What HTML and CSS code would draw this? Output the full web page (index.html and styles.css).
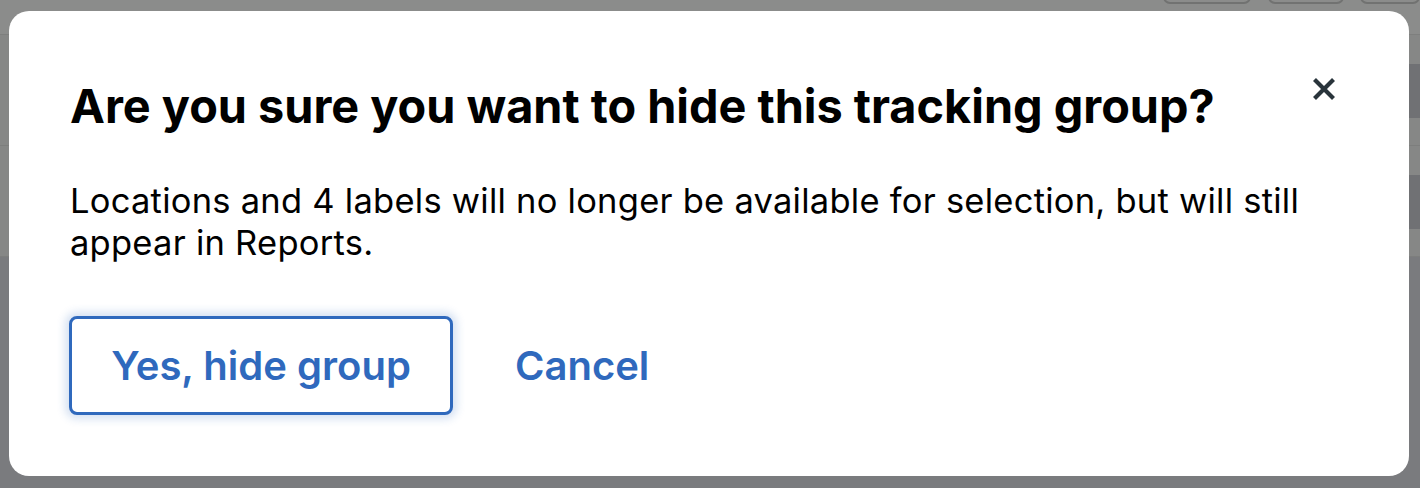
FILE: index.html
```html
<!DOCTYPE html>
<html lang="en">
<head>
<meta charset="utf-8">
<title>Hide tracking group</title>
<link rel="stylesheet" href="styles.css">
</head>
<body>
<div class="page">
  <header class="topbar">
    <span class="tb-btn tb-1"></span>
    <span class="tb-btn tb-2"></span>
    <span class="tb-btn tb-3"></span>
  </header>
  <div class="row"><span class="row-btn"></span></div>
  <div class="row"><span class="row-btn"></span></div>
  <div class="rest"></div>
</div>

<div class="modal" role="dialog" aria-labelledby="m-title">
  <button class="close" aria-label="Close">
    <svg width="24" height="24" viewBox="0 0 24 24" aria-hidden="true">
      <path d="M2.5 2.5 L21.5 21.5 M21.5 2.5 L2.5 21.5" stroke="#29343b" stroke-width="4.2" stroke-linecap="butt" fill="none"/>
    </svg>
  </button>
  <h2 id="m-title" class="title">Are you sure you want to hide this tracking group?</h2>
  <p class="body">Locations and 4 labels will no longer be available for selection, but will still appear in Reports.</p>
  <div class="actions">
    <button class="btn-primary">Yes, hide group</button>
    <button class="btn-link">Cancel</button>
  </div>
</div>
</body>
</html>
```
FILE: styles.css
```css
* { box-sizing: border-box; }
html, body { margin: 0; padding: 0; }
body {
  width: 1420px;
  height: 488px;
  overflow: hidden;
  background: #7a7b7e;
  font-family: "Inter", "Liberation Sans", sans-serif;
  position: relative;
}
.page {
  display: flex;
  flex-direction: column;
  height: 488px;
}
.topbar {
  height: 35px;
  background: #8b8c8b;
  border-bottom: 1px solid #7e7f7e;
  position: relative;
}
.tb-btn {
  position: absolute;
  top: -30px;
  height: 34px;
  border: 2px solid #717271;
  border-radius: 7px;
}
.tb-1 { left: 1163px; width: 88px; }
.tb-2 { left: 1268px; width: 76px; }
.tb-3 { left: 1360px; width: 60px; }
.row {
  height: 111px;
  background: #868786;
  border-bottom: 1px solid #7d7e7d;
  position: relative;
}
.row-btn {
  position: absolute;
  left: 1390px;
  top: 29px;
  width: 40px;
  height: 54px;
  border-radius: 8px;
  background: #707174;
}
.rest { flex: 1; background: #7a7b7e; }

.modal {
  position: absolute;
  left: 9px;
  top: 11px;
  width: 1400px;
  height: 465px;
  background: #ffffff;
  border-radius: 20px;
  padding: 67px 60px 0 61px;
}
.close {
  position: absolute;
  right: 73px;
  top: 66px;
  width: 24px;
  height: 24px;
  padding: 0;
  border: 0;
  background: none;
  display: flex;
}
.title {
  margin: 0;
  font-size: 46.8px;
  line-height: 56px;
  font-weight: 700;
  color: #000;
}
.body {
  margin: 46px 0 0;
  font-size: 34.5px;
  letter-spacing: 0.25px;
  line-height: 42px;
  color: #000;
  font-weight: 400;
}
.actions {
  display: flex;
  align-items: center;
  gap: 62px;
  margin: 52px 0 0 -1px;
}
.btn-primary {
  width: 384px;
  height: 99px;
  border: 3px solid #2f69bd;
  border-radius: 8px;
  background: #fff;
  color: #2f69bd;
  font-family: inherit;
  font-size: 40px;
  font-weight: 600;
  box-shadow: 0 0 8px 4px rgba(47, 105, 189, 0.2);
}
.btn-link {
  border: 0;
  background: none;
  padding: 0;
  color: #2f69bd;
  font-family: inherit;
  font-size: 40px;
  font-weight: 600;
}
```
